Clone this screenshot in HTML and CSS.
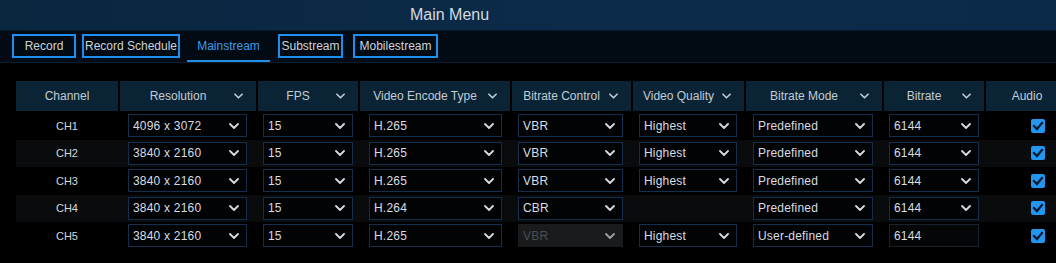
FILE: index.html
```html
<!DOCTYPE html>
<html lang="en">
<head>
    <meta charset="UTF-8">
    <title>Main Menu - Mainstream</title>
    <link rel="stylesheet" href="styles.css">
</head>
<body>
    <!-- Title bar -->
    <div class="topbar">Main Menu</div>

    <!-- Record tabs -->
    <div class="tabbar">
        <div class="tab tab-record">Record</div>
        <div class="tab tab-schedule">Record Schedule</div>
        <div class="tab tab-main active">Mainstream</div>
        <div class="tab tab-sub">Substream</div>
        <div class="tab tab-mobile">Mobilestream</div>
    </div>

    <div class="content">
        <!-- Column headers -->
        <div class="head-row">
            <div class="head-cell plain">Channel</div>
            <div class="head-cell"><span class="label">Resolution</span><svg class="chev" viewBox="0 0 10 6"><polyline points="1,1 5,5 9,1"/></svg></div>
            <div class="head-cell"><span class="label">FPS</span><svg class="chev" viewBox="0 0 10 6"><polyline points="1,1 5,5 9,1"/></svg></div>
            <div class="head-cell"><span class="label">Video Encode Type</span><svg class="chev" viewBox="0 0 10 6"><polyline points="1,1 5,5 9,1"/></svg></div>
            <div class="head-cell"><span class="label">Bitrate Control</span><svg class="chev" viewBox="0 0 10 6"><polyline points="1,1 5,5 9,1"/></svg></div>
            <div class="head-cell"><span class="label">Video Quality</span><svg class="chev" viewBox="0 0 10 6"><polyline points="1,1 5,5 9,1"/></svg></div>
            <div class="head-cell"><span class="label">Bitrate Mode</span><svg class="chev" viewBox="0 0 10 6"><polyline points="1,1 5,5 9,1"/></svg></div>
            <div class="head-cell"><span class="label">Bitrate</span><svg class="chev" viewBox="0 0 10 6"><polyline points="1,1 5,5 9,1"/></svg></div>
            <div class="head-cell plain audio">Audio</div>
        </div>

        <!-- Channel rows, filled by script -->
        <div class="rows" id="rows"></div>
    </div>

    <script>
        // Stream settings per channel (null = field hidden)
        const channels = [
            { ch: 'CH1', res: '4096 x 3072', fps: '15', enc: 'H.265', ctrl: 'VBR', quality: 'Highest', mode: 'Predefined', rate: '6144' },
            { ch: 'CH2', res: '3840 x 2160', fps: '15', enc: 'H.265', ctrl: 'VBR', quality: 'Highest', mode: 'Predefined', rate: '6144' },
            { ch: 'CH3', res: '3840 x 2160', fps: '15', enc: 'H.265', ctrl: 'VBR', quality: 'Highest', mode: 'Predefined', rate: '6144' },
            { ch: 'CH4', res: '3840 x 2160', fps: '15', enc: 'H.264', ctrl: 'CBR', quality: null, mode: 'Predefined', rate: '6144' },
            { ch: 'CH5', res: '3840 x 2160', fps: '15', enc: 'H.265', ctrl: 'VBR', quality: 'Highest', mode: 'User-defined', rate: '6144', ctrlDisabled: true, rateInput: true }
        ];

        const chevron = '<svg class="chev" viewBox="0 0 10 6"><polyline points="1,1 5,5 9,1"/></svg>';

        function select(value, extra) {
            if (value === null) return '<div></div>';
            return '<div class="select ' + (extra || '') + '"><span>' + value + '</span>' + chevron + '</div>';
        }

        const rows = document.getElementById('rows');
        channels.forEach(c => {
            const row = document.createElement('div');
            row.className = 'row';
            row.innerHTML =
                '<div class="ch">' + c.ch + '</div>' +
                select(c.res) +
                select(c.fps) +
                select(c.enc) +
                select(c.ctrl, c.ctrlDisabled ? 'disabled' : '') +
                select(c.quality) +
                select(c.mode) +
                (c.rateInput ? '<div class="input">' + c.rate + '</div>' : select(c.rate)) +
                '<div class="audio-cell"><span class="check"><svg viewBox="0 0 14 14"><polyline points="3,7 6,10 11,4"/></svg></span></div>';
            rows.appendChild(row);
        });
    </script>
</body>
</html>
```

FILE: styles.css
```css
/* Page basics */
body {
    margin: 0;
    width: 1056px;
    height: 263px;
    background: #000;
    font-family: "Liberation Sans", Arial, sans-serif;
    font-size: 12px;
    color: #d8dde2;
    overflow: hidden;
}

/* Title bar */
.topbar {
    height: 30px;
    line-height: 30px;
    background: linear-gradient(90deg, #0a2740, #0c2b49 60%, #0b2a47);
    color: #d4dae0;
    font-size: 16px;
    text-align: center;
    padding-right: 157px;
}

/* Tab strip */
.tabbar {
    height: 32px;
    background: #020a14;
    border-top: 1px solid #071a2c;
    border-bottom: 1px solid #0c1d2e;
    box-sizing: border-box;
    height: 33px;
    display: flex;
    align-items: flex-start;
    padding: 3px 0 0 12px;
}

.tab {
    height: 24px;
    box-sizing: border-box;
    border: 2px solid #1b8ff0;
    line-height: 20px;
    text-align: center;
    color: #cfd3d8;
    white-space: nowrap;
}

.tab.active {
    height: 28px;
    border: none;
    border-bottom: 2px solid #1f8fe6;
    line-height: 24px;
    padding-bottom: 2px;
    color: #3d9be6;
}

.tab-record { width: 64px; }
.tab-schedule { width: 98px; margin-left: 6px; }
.tab-main { width: 83px; margin-left: 7px; }
.tab-sub { width: 65px; margin-left: 8px; }
.tab-mobile { width: 85px; margin-left: 10px; }

/* Table area */
.content {
    padding: 18px 0 0 16px;
}

.head-row {
    display: grid;
    grid-template-columns: 102px 136px 100px 150px 119px 111px 136px 100px 1fr;
    column-gap: 2px;
    height: 30px;
}

.head-cell {
    background: #0a2436;
    color: #c3cbd3;
    display: flex;
    align-items: center;
    padding: 0 13px 0 8px;
    white-space: nowrap;
}

.head-cell .label {
    flex: 1;
    text-align: center;
}

.head-cell.plain {
    justify-content: center;
    padding: 0;
}

.head-cell.audio {
    padding-left: 12px;
}

.chev {
    width: 10px;
    height: 6px;
    flex: none;
    fill: none;
    stroke: #d6dbe0;
    stroke-width: 1.8;
    stroke-linecap: round;
    stroke-linejoin: round;
}

.head-cell .chev {
    margin-left: 6px;
    width: 9px;
    stroke: #c3cbd3;
}

/* Channel rows */
.rows {
    margin-top: 1px;
}

.row {
    display: grid;
    grid-template-columns: 96px 119px 90px 133px 105px 98px 120px 90px 1fr;
    column-gap: 16px;
    align-items: center;
    height: 27.5px;
}

.row:nth-child(even) {
    background: #0a0b0d;
}

.ch {
    text-align: center;
    padding-left: 6px;
    font-size: 11px;
    color: #d3d8dd;
}

.select,
.input {
    height: 23px;
    box-sizing: border-box;
    border: 1px solid #132f4c;
    background: #020304;
    display: flex;
    align-items: center;
    padding: 0 7px 0 4px;
    font-size: 12px;
    letter-spacing: 0.2px;
}

.select span {
    flex: 1;
}

.select.disabled {
    background: #1a1b1d;
    border-color: #1a1b1d;
    color: #4a4d52;
}

.select.disabled .chev {
    stroke: #9aa0a6;
}

.input {
    border-color: #18222d;
    background: #050607;
}

/* Audio checkbox */
.audio-cell {
    display: flex;
    padding-left: 36px;
}

.check {
    width: 14px;
    height: 14px;
    border-radius: 2px;
    background: #2396f0;
    display: flex;
}

.check svg {
    width: 14px;
    height: 14px;
    fill: none;
    stroke: #07182c;
    stroke-width: 2.2;
    stroke-linecap: square;
}
```
